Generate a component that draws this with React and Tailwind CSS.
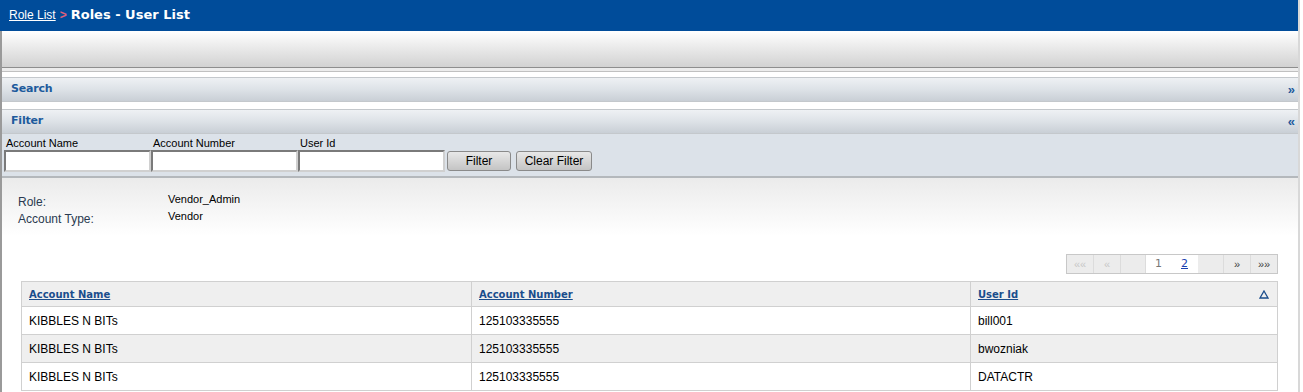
import React from "react";

const rows = [
  { name: "KIBBLES N BITs", number: "125103335555", user: "bill001" },
  { name: "KIBBLES N BITs", number: "125103335555", user: "bwozniak" },
  { name: "KIBBLES N BITs", number: "125103335555", user: "DATACTR" },
];

const verdana = "font-['DejaVu_Sans',Verdana,sans-serif]";
const arial = "font-['Liberation_Sans',Arial,sans-serif]";

function Bar({ title, arrow }) {
  return (
    <div className="h-[25px] flex items-center justify-between px-[9px] border-y border-[#c4c8cc] bg-gradient-to-b from-[#eef1f4] via-[#dde2e7] to-[#c9cfd6]">
      <span className={`${verdana} text-[11px] font-bold text-[#1d5a9c] tracking-[-0.2px]`}>{title}</span>
      <span className={`${arial} text-[13px] font-bold text-[#1d5a9c] -mr-[6px] leading-none`}>{arrow}</span>
    </div>
  );
}

function Field({ label }) {
  return (
    <div className="flex flex-col w-[147px]">
      <label className="text-[11px] leading-[13px] text-black pl-[2px]">{label}</label>
      <input className="h-[22px] border-2 border-t-[#7a7a7a] border-l-[#7a7a7a] border-r-[#d0d0d0] border-b-[#d0d0d0] bg-white" />
    </div>
  );
}

export default function App() {
  return (
    <div className={`${arial} w-[1303px] h-[392px] bg-white overflow-hidden`}>
      <div className="w-[1300px] h-full border-l-2 border-r-2 border-[#9a9a9a] border-r-[#d8d8d8]">
        {/* title */}
        <div className="h-[31px] bg-[#004c9a] flex items-center pl-[9px] -ml-[2px] gap-[4px] pb-[2px]">
          <a className="text-white underline text-[12px]">Role List</a>
          <span className="text-[#e0607a] font-bold text-[12px]">&gt;</span>
          <span className={`${verdana} text-white font-bold text-[13px]`}>Roles - User List</span>
        </div>

        {/* toolbar */}
        <div className="h-[37px] bg-gradient-to-b from-white to-[#d2d2d2] border-b border-[#8e8e8e]" />
        <div className="h-[4px] bg-[#ececec] border-b border-[#c0c0c0]" />
        <div className="h-[5px]" />

        <Bar title="Search" arrow="»" />
        <div className="h-[7px]" />
        <Bar title="Filter" arrow="«" />

        {/* filter form */}
        <div className="bg-[#dce2e9] h-[44px] border-b-2 border-[#b4b8bc] flex items-end pl-[2px] pb-[4px]">
          <Field label="Account Name" />
          <Field label="Account Number" />
          <Field label="User Id" />
          <button className="ml-[2px] mb-[1px] w-[64px] h-[20px] rounded-[3px] border border-[#8a8a8a] bg-gradient-to-b from-[#e8e8e8] to-[#c4c4c4] text-[12px] text-black">
            Filter
          </button>
          <button className="ml-[5px] mb-[1px] w-[76px] h-[20px] rounded-[3px] border border-[#8a8a8a] bg-gradient-to-b from-[#e8e8e8] to-[#c4c4c4] text-[12px] text-black">
            Clear Filter
          </button>
        </div>

        {/* info */}
        <div className="h-[58px] bg-gradient-to-b from-[#ebebeb] to-white pt-[15px] pl-[16px]">
          <div className="flex h-[17px] items-start">
            <span className="w-[150px] text-[12px] text-[#2a3a50]">Role:</span>
            <span className="text-[11px] text-black -mt-[2px]">Vendor_Admin</span>
          </div>
          <div className="flex h-[17px] items-start">
            <span className="w-[150px] text-[12px] text-[#2a3a50]">Account Type:</span>
            <span className="text-[11px] text-black -mt-[2px]">Vendor</span>
          </div>
        </div>

        {/* pager */}
        <div className="flex justify-end pr-[20px] mt-[18px]">
          <div className="flex h-[20px] border border-[#c8c8c8] bg-[#ececec] text-[11px]">
            <span className="w-[27px] flex items-center justify-center text-[#c8c8c8] border-r border-[#dcdcdc]">««</span>
            <span className="w-[27px] flex items-center justify-center text-[#c8c8c8] border-r border-[#dcdcdc]">«</span>
            <span className="w-[25px] border-r border-[#dcdcdc]" />
            <span className={`${verdana} w-[25px] flex items-center justify-center bg-white text-[#777]`}>1</span>
            <span className={`${verdana} w-[27px] flex items-center justify-center bg-white text-[#1a3fb0] underline`}>2</span>
            <span className="w-[26px] border-r border-[#dcdcdc]" />
            <span className="w-[27px] flex items-center justify-center text-[#444] border-r border-[#dcdcdc]">»</span>
            <span className="w-[26px] flex items-center justify-center text-[#444]">»»</span>
          </div>
        </div>

        {/* table */}
        <div className="ml-[19px] mr-[20px] mt-[7px]">
          <table className="w-full border-collapse text-[12px]">
            <thead>
              <tr className="h-[25px] bg-[#efefef]">
                <th className={`${verdana} text-left font-bold text-[10px] pl-[7px] border border-[#d0d0d0] w-[450px]`}>
                  <a className="text-[#1a4d8c] underline">Account Name</a>
                </th>
                <th className={`${verdana} text-left font-bold text-[10px] pl-[7px] border border-[#d0d0d0] w-[499px]`}>
                  <a className="text-[#1a4d8c] underline">Account Number</a>
                </th>
                <th className={`${verdana} text-left font-bold text-[10px] pl-[7px] border border-[#d0d0d0]`}>
                  <div className="flex justify-between items-center pr-[8px]">
                    <a className="text-[#1a4d8c] underline">User Id</a>
                    <svg width="10" height="9" viewBox="0 0 10 9">
                      <path d="M5 1 L9 8 L1 8 Z" fill="none" stroke="#1a4d8c" strokeWidth="1.3" />
                    </svg>
                  </div>
                </th>
              </tr>
            </thead>
            <tbody>
              {rows.map((r, i) => (
                <tr key={i} className={`h-[28px] ${i % 2 === 1 ? "bg-[#efefef]" : "bg-white"}`}>
                  <td className="pl-[7px] border border-[#d0d0d0]">{r.name}</td>
                  <td className="pl-[7px] border border-[#d0d0d0]">{r.number}</td>
                  <td className="pl-[7px] border border-[#d0d0d0]">{r.user}</td>
                </tr>
              ))}
            </tbody>
          </table>
        </div>
      </div>
    </div>
  );
}
